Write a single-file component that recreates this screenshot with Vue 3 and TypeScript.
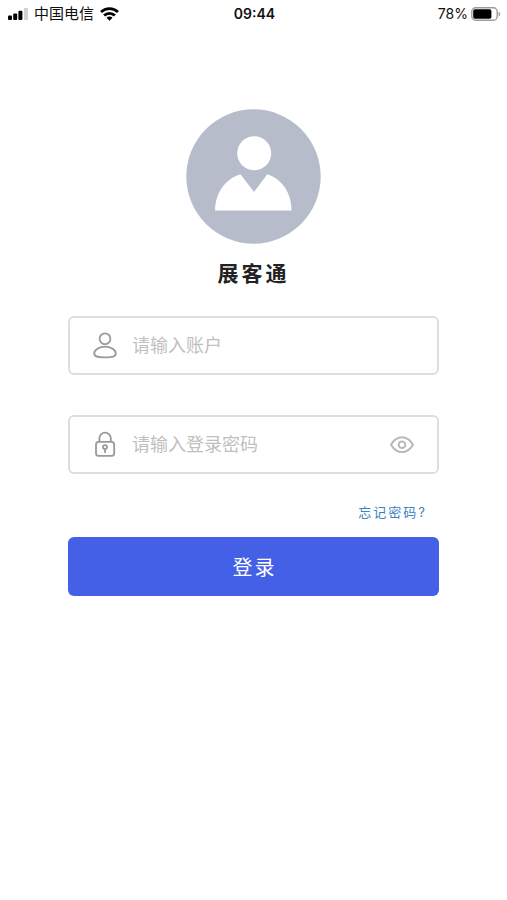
<script setup lang="ts">
import { ref } from 'vue'

const account = ref('')
const password = ref('')
const passwordVisible = ref(false)
</script>

<template>
  <div class="screen">
    <header class="status">
      <div class="network">
        <svg class="signal" width="20" height="12" viewBox="0 0 20 12" aria-hidden="true">
          <rect x="0" y="7.600" width="4" height="4.400" rx="1" />
          <rect x="5.200" y="5.600" width="4" height="6.400" rx="1" />
          <rect x="10.400" y="2.800" width="4" height="9.200" rx="1" />
          <rect x="16" y="0" width="4" height="12" rx="1" fill="#d2d2d2" />
        </svg>
        <span class="carrier">中国电信</span>
        <svg width="19" height="14" viewBox="0 0 19 14" fill="none" stroke="#000" stroke-width="2.8" aria-hidden="true">
          <path d="M1 5.100C5.800.5 13.200.5 18 5.100" />
          <path d="M4.100 8.500c3.100-2.900 7.700-2.900 10.800 0" />
          <path d="M6.500 10.700c1.700-1.500 4.300-1.500 6 0L9.500 13.800Z" fill="#000" stroke="none" />
        </svg>
      </div>
      <time class="clock">09:44</time>
      <div class="power">
        <span>78%</span>
        <svg width="30" height="14" viewBox="0 0 30 14" aria-hidden="true">
          <rect x=".8" y=".8" width="25.400" height="12.400" rx="3.800" fill="#fff" stroke="#9b9b9b" stroke-width="1.400" />
          <rect x="2.200" y="2.200" width="18.200" height="9.600" rx="1.800" />
          <path d="M27.600 4.700c2.100.6 2.100 4 0 4.600Z" fill="#9b9b9b" />
        </svg>
      </div>
    </header>

    <main class="login">
      <svg class="avatar" viewBox="0 0 135 135" aria-hidden="true">
        <circle cx="67.500" cy="67.500" r="67.200" fill="#b7bcca" />
        <circle cx="68.200" cy="44.200" r="17" fill="#fff" />
        <path d="M29 101.500C29.500 84 39 70 54.500 65.300L68 83 81.300 65.300C96 70 105.500 84 105.500 101.500Z" fill="#fff" />
      </svg>
      <h1>展客通</h1>

      <form @submit.prevent>
        <label class="field">
          <svg width="26" height="28" viewBox="0 0 26 28" fill="none" stroke="#999" stroke-width="1.800" aria-hidden="true">
            <circle cx="13" cy="6.800" r="5.400" />
            <path d="M13 14.600C7 14.600 2.200 18 2.200 21.600c0 3 3 3.800 10.800 3.800s10.800-.8 10.800-3.800c0-3.600-4.800-7-10.800-7Z" />
          </svg>
          <input v-model="account" type="text" placeholder="请输入账户" autocomplete="username" />
        </label>

        <div class="field">
          <svg width="26" height="28" viewBox="0 0 26 28" fill="none" stroke="#999" stroke-width="1.800" aria-hidden="true">
            <rect x="4" y="10.800" width="18.200" height="14" rx="2.600" />
            <path d="M7.400 10.600V7.400a5.700 5.700 0 0 1 11.400 0V10.600" />
            <circle cx="13" cy="16.100" r="2" />
            <path d="M13 18.200v3.800" />
          </svg>
          <input v-model="password" :type="passwordVisible ? 'text' : 'password'" placeholder="请输入登录密码" aria-label="请输入登录密码" autocomplete="current-password" />
          <button class="reveal" type="button" aria-label="显示密码" :aria-pressed="passwordVisible" @click="passwordVisible = !passwordVisible">
            <svg width="26" height="20" viewBox="0 0 26 20" fill="none" stroke="#b8b8b8" stroke-width="2" aria-hidden="true">
              <path d="M2 9.700c3-5 6.500-7.400 11-7.400S21 4.700 24 9.700c-3 5-6.500 7.400-11 7.400S5 14.700 2 9.700Z" stroke-linejoin="round" />
              <circle cx="13" cy="9.700" r="3.300" />
            </svg>
          </button>
        </div>

        <a class="forgot" href="#">忘记密码?</a>
        <button class="submit" type="submit">登录</button>
      </form>
    </main>
  </div>
</template>

<style>
body {
  margin: 0;
  background: #fff;
}
</style>

<style scoped>
.screen {
  min-height: 100vh;
  background: #fff;
  font-family: Inter, "Noto Sans CJK SC", sans-serif;
}

.status {
  display: grid;
  grid-template-columns: 1fr auto 1fr;
  align-items: center;
  height: 28px;
  padding: 0 6px 0 8px;
  color: #111;
  font-size: 14px;
  line-height: 20px;
}

.network,
.power {
  display: flex;
  align-items: center;
  gap: 6px;
}

.power {
  justify-content: flex-end;
  gap: 3px;
}

.carrier {
  font-size: 15px;
}

.clock {
  font-weight: 600;
}

.login {
  display: flex;
  flex-direction: column;
  align-items: center;
  padding: 81px 68px 40px;
}

.avatar {
  width: 135px;
  height: 135px;
}

h1 {
  margin: 15px 0 27px;
  color: #222;
  font-size: 21px;
  font-weight: 700;
  line-height: 30px;
  letter-spacing: 3px;
}

form {
  display: flex;
  flex-direction: column;
  width: 100%;
}

.field {
  display: flex;
  align-items: center;
  box-sizing: border-box;
  height: 59px;
  padding: 0 22px;
  border: 2px solid #dedede;
  border-radius: 6px;
}

.field + .field {
  margin-top: 40px;
}

.field svg {
  flex: none;
}

input {
  flex: 1;
  min-width: 0;
  margin: 0 0 0 14px;
  padding: 0;
  border: 0;
  outline: 0;
  background: transparent;
  color: #333;
  font-family: inherit;
  font-size: 18px;
  line-height: 28px;
}

input::placeholder {
  color: #bfbfc1;
  opacity: 1;
}

.reveal {
  display: flex;
  padding: 0;
  border: 0;
  background: none;
  cursor: pointer;
}

.forgot {
  align-self: flex-end;
  margin: 28px 12px 15px 0;
  color: #3c82bd;
  font-size: 13px;
  line-height: 20px;
  letter-spacing: 2px;
  text-decoration: none;
}

.submit {
  height: 59px;
  padding: 2px 0 0 2px;
  border: 0;
  border-radius: 6px;
  background: #4460e6;
  color: #fff;
  font-family: inherit;
  font-size: 20px;
  line-height: 30px;
  letter-spacing: 2px;
  cursor: pointer;
}
</style>
